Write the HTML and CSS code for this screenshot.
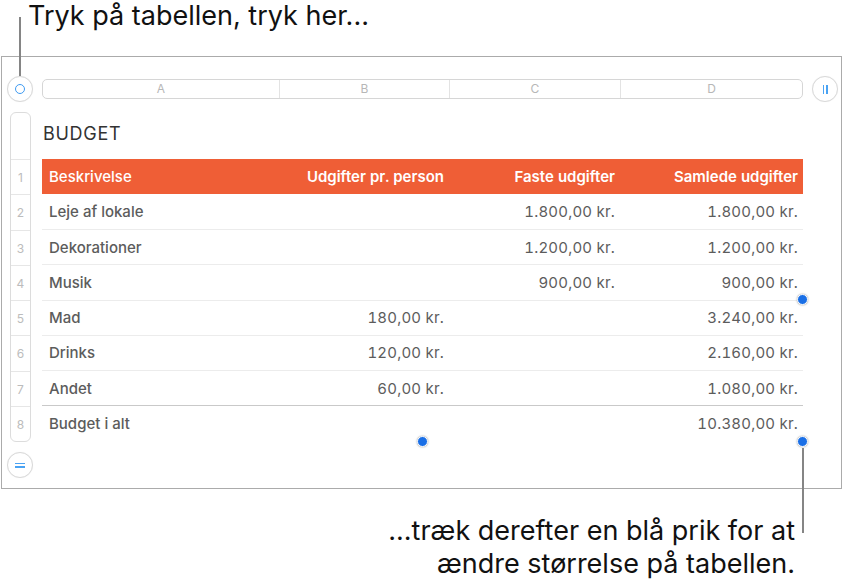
FILE: index.html
```html
<!DOCTYPE html>
<html lang="da">
<head>
  <meta charset="UTF-8" />
  <title>Budget – tabel</title>
  <link rel="stylesheet" href="styles.css">
</head>
<body>
  <p class="caption caption-top">Tryk på tabellen, tryk her...</p>

  <div class="panel">
    <!-- left gutter: select knob, row numbers, add-row knob -->
    <div class="gutter">
      <button class="knob" aria-label="Vælg tabel"><span class="ring"></span></button>
      <ol class="row-heads">
        <li class="row-head-title"></li>
        <li>1</li>
        <li>2</li>
        <li>3</li>
        <li>4</li>
        <li>5</li>
        <li>6</li>
        <li>7</li>
        <li>8</li>
      </ol>
      <button class="knob knob-rows" aria-label="Rækker"><span class="bar"></span><span class="bar"></span></button>
    </div>

    <div class="sheet">
      <div class="col-heads">
        <span>A</span>
        <span>B</span>
        <span>C</span>
        <span>D</span>
      </div>
      <h2 class="title">BUDGET</h2>
      <table class="budget">
        <colgroup>
          <col class="col-a">
          <col class="col-b">
          <col class="col-c">
          <col class="col-d">
        </colgroup>
        <thead>
          <tr>
            <th class="label">Beskrivelse</th>
            <th>Udgifter pr. person</th>
            <th>Faste udgifter</th>
            <th>Samlede udgifter</th>
          </tr>
        </thead>
        <tbody>
          <tr><td class="label">Leje af lokale</td><td></td><td>1.800,00 kr.</td><td>1.800,00 kr.</td></tr>
          <tr><td class="label">Dekorationer</td><td></td><td>1.200,00 kr.</td><td>1.200,00 kr.</td></tr>
          <tr><td class="label">Musik</td><td></td><td>900,00 kr.</td><td>900,00 kr.</td></tr>
          <tr><td class="label">Mad</td><td>180,00 kr.</td><td></td><td>3.240,00 kr.</td></tr>
          <tr><td class="label">Drinks</td><td>120,00 kr.</td><td></td><td>2.160,00 kr.</td></tr>
          <tr><td class="label">Andet</td><td>60,00 kr.</td><td></td><td>1.080,00 kr.</td></tr>
        </tbody>
        <tfoot>
          <tr><td class="label">Budget i alt</td><td></td><td></td><td>10.380,00 kr.</td></tr>
        </tfoot>
      </table>
    </div>

    <div class="gutter gutter-right">
      <button class="knob knob-cols" aria-label="Kolonner"><span class="bar"></span><span class="bar"></span></button>
    </div>

    <!-- resize handles -->
    <span class="dot dot-right"></span>
    <span class="dot dot-bottom"></span>
    <span class="dot dot-corner"></span>
  </div>

  <p class="caption caption-bottom">...træk derefter en blå prik for at<br>ændre størrelse på tabellen.</p>

  <span class="callout callout-top"></span>
  <span class="callout callout-bottom"></span>
</body>
</html>
```

FILE: styles.css
```css
/* Base */
* {
  box-sizing: border-box;
  margin: 0;
  padding: 0;
}
body {
  width: 843px;
  height: 588px;
  background: #fff;
  font-family: Inter, 'Liberation Sans', sans-serif;
  color: #111;
  position: relative;
  overflow: hidden;
}

/* Captions */
.caption {
  font-size: 27px;
  line-height: 30px;
  color: #111;
}
.caption-top {
  height: 56px;
  padding-left: 28px;
  line-height: 32px;
}
.caption-bottom {
  margin-top: 25px;
  line-height: 33px;
  text-align: right;
  padding-right: 48px;
}

/* Callout lines */
.callout {
  position: absolute;
  width: 2px;
  background: #858585;
}
.callout-top {
  left: 19px;
  top: 17px;
  height: 59px;
}
.callout-bottom {
  left: 802px;
  top: 448px;
  height: 85px;
}

/* Panel frame */
.panel {
  position: relative;
  margin-left: 1px;
  width: 841px;
  height: 433px;
  border: 1px solid #ababab;
  display: grid;
  grid-template-columns: 40px 761px 1fr;
}

/* Gutters */
.gutter {
  display: flex;
  flex-direction: column;
  align-items: flex-start;
}
.knob {
  width: 26px;
  height: 26px;
  margin: 19px 0 0 5px;
  border: 1px solid #d9d9d9;
  border-radius: 50%;
  background: #fff;
  box-shadow: 0 0 1px rgba(0, 0, 0, 0.08);
  display: flex;
  align-items: center;
  justify-content: center;
  gap: 2px;
}
.knob .ring {
  width: 10px;
  height: 10px;
  border: 1.5px solid #3f9bf2;
  border-radius: 50%;
}
.knob .bar {
  display: block;
  background: #4aa3f3;
}
.knob-rows {
  margin-top: 10px;
  flex-direction: column;
}
.knob-rows .bar {
  width: 10px;
  height: 1.5px;
}
.gutter-right .knob {
  margin-left: 9px;
}
.knob-cols .bar {
  width: 1.5px;
  height: 9px;
}

.row-heads {
  list-style: none;
  margin: 10px 0 0 8px;
  width: 21px;
  border: 1px solid #dcdcdc;
  border-radius: 6px;
  font-size: 12px;
  color: #bcbcbc;
  text-align: center;
}
.row-heads li {
  height: 35.25px;
  line-height: 35px;
  border-top: 1px solid #e6e6e6;
}
.row-heads .row-head-title {
  height: 46px;
  border-top: none;
}

/* Sheet */
.col-heads {
  margin-top: 22px;
  height: 20px;
  border: 1px solid #d6d6d6;
  border-radius: 5px;
  display: grid;
  grid-template-columns: 236px 170px 171px 1fr;
  font-size: 12px;
  color: #b7b7b7;
}
.col-heads span {
  text-align: center;
  line-height: 18px;
}
.col-heads span + span {
  border-left: 1px solid #e3e3e3;
}

.title {
  margin: 25px 0 15px 1px;
  font-size: 18px;
  line-height: 20px;
  font-weight: 400;
  color: #333;
  letter-spacing: 0.7px;
}

.budget {
  width: 761px;
  table-layout: fixed;
  border-collapse: collapse;
  font-size: 15px;
  color: #5c5c5c;
  font-variant-numeric: tabular-nums;
}
.col-a { width: 237px; }
.col-b { width: 170px; }
.col-c { width: 171px; }
.col-d { width: 183px; }

.budget th,
.budget td {
  height: 35.25px;
  padding: 0 5px 0 7px;
  text-align: right;
  white-space: nowrap;
}
.budget td {
  letter-spacing: 0.2px;
}
.budget .label {
  text-align: left;
  font-weight: 500;
  letter-spacing: 0;
}
.budget thead th {
  background: #ef5e36;
  color: #fff;
  font-weight: 600;
}
.budget tbody tr {
  border-bottom: 1px solid #ececec;
}
.budget tbody tr:last-child {
  border-bottom: 1px solid #c9c9c9;
}

/* Resize handles */
.dot {
  position: absolute;
  width: 11px;
  height: 11px;
  border: 1.5px solid #fff;
  border-radius: 50%;
  background: #1a6fe6;
  box-shadow: 0 0 2px rgba(0, 0, 0, 0.4);
}
.dot-right {
  left: 795px;
  top: 237px;
}
.dot-bottom {
  left: 415px;
  top: 379px;
}
.dot-corner {
  left: 795px;
  top: 379px;
}
```
